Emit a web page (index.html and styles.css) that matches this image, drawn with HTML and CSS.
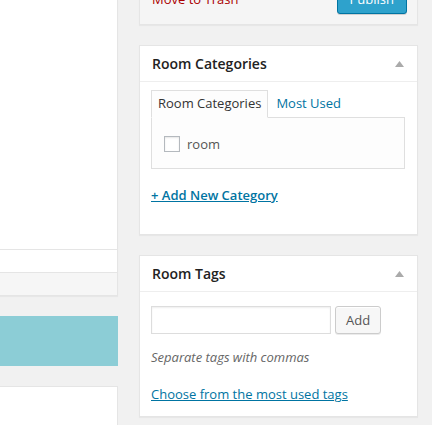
FILE: index.html
```html
<!DOCTYPE html>
<html>
<head>
<meta charset="utf-8">
<link rel="stylesheet" href="styles.css">
</head>
<body>
<div class="wrap">
  <div class="main-col">
    <div class="editor">
      <div class="editor-body"></div>
      <div class="editor-row"></div>
      <div class="editor-status"></div>
    </div>
    <div class="notice-bar"></div>
    <div class="lower-box"></div>
  </div>
  <div class="side-col">
    <div class="postbox publish-box">
      <div class="publish-actions">
        <a class="submitdelete" href="#">Move to Trash</a>
        <button class="btn-primary">Publish</button>
      </div>
    </div>

    <div class="postbox">
      <div class="postbox-head">
        <h3 class="postbox-title">Room Categories</h3>
        <svg class="toggle" width="9" height="6" viewBox="0 0 9 6"><polygon points="4.5,0 9,6 0,6" fill="#aaa"/></svg>
      </div>
      <div class="inside cat-inside">
        <ul class="tabs">
          <li class="tab tab-active">Room Categories</li>
          <li class="tab"><a href="#">Most Used</a></li>
        </ul>
        <div class="tabs-panel">
          <label class="cat-item"><span class="checkbox"></span><span>room</span></label>
        </div>
        <h4 class="add-new"><a href="#">+ Add New Category</a></h4>
      </div>
    </div>

    <div class="postbox">
      <div class="postbox-head">
        <h3 class="postbox-title">Room Tags</h3>
        <svg class="toggle" width="9" height="6" viewBox="0 0 9 6"><polygon points="4.5,0 9,6 0,6" fill="#aaa"/></svg>
      </div>
      <div class="inside tag-inside">
        <div class="ajaxtag">
          <input class="newtag" type="text">
          <button class="btn">Add</button>
        </div>
        <p class="howto">Separate tags with commas</p>
        <p class="tagcloud-link"><a href="#">Choose from the most used tags</a></p>
      </div>
    </div>
  </div>
</div>
</body>
</html>
```
FILE: styles.css
```css
html, body {
  margin: 0;
  padding: 0;
  background: #f1f1f1;
  overflow: hidden;
}
body {
  font-family: "Open Sans", "Liberation Sans", sans-serif;
  font-size: 13px;
  color: #444;
  height: 425px;
}
.wrap {
  display: flex;
  align-items: flex-start;
}
.main-col {
  width: 118px;
  margin-right: 21px;
  flex: none;
}
.editor {
  background: #fff;
  border-right: 1px solid #e5e5e5;
  border-bottom: 1px solid #e5e5e5;
  box-shadow: 0 1px 1px rgba(0,0,0,.04);
}
.editor-body {
  height: 249px;
  border-bottom: 1px solid #e5e5e5;
}
.editor-row {
  height: 22px;
  border-bottom: 1px solid #e5e5e5;
}
.editor-status {
  height: 22px;
  background: #f6f6f6;
}
.notice-bar {
  margin-top: 20px;
  height: 50px;
  background: #8ccdd6;
}
.lower-box {
  margin-top: 20px;
  height: 39px;
  background: #fff;
  border-top: 1px solid #e5e5e5;
  border-right: 1px solid #e5e5e5;
}
.side-col {
  width: 279px;
  flex: none;
}
.postbox {
  background: #fff;
  border: 1px solid #e5e5e5;
  box-shadow: 0 1px 1px rgba(0,0,0,.04);
  margin-bottom: 20px;
}
.postbox:last-child {
  margin-bottom: 0;
}
.publish-box {
  margin-top: -27px;
  background: #f5f5f5;
}
.publish-actions {
  display: flex;
  justify-content: space-between;
  align-items: center;
  padding: 10px 10px 10px 12px;
}
.submitdelete {
  color: #a00;
  text-decoration: none;
  line-height: 30px;
}
.btn-primary {
  font-family: "Open Sans", "Liberation Sans", sans-serif;
  font-size: 13px;
  height: 30px;
  line-height: 28px;
  padding: 0 12px 2px;
  color: #fff;
  background: #2ea2cc;
  border: 1px solid #0074a2;
  border-radius: 3px;
  box-shadow: inset 0 1px 0 rgba(120,200,230,.5), 0 1px 0 rgba(0,0,0,.15);
  box-sizing: border-box;
}
.postbox-head {
  display: flex;
  justify-content: space-between;
  align-items: center;
  padding: 8px 13px 8px 12px;
  border-bottom: 1px solid #eee;
}
.postbox-title {
  margin: 0;
  font-size: 14px;
  font-weight: 600;
  line-height: 19px;
  color: #222;
}
.toggle {
  display: block;
}
.inside {
  padding: 0 12px 0 11px;
}
.cat-inside {
  padding-top: 8px;
  padding-bottom: 29px;
}
.tabs {
  list-style: none;
  margin: 0;
  padding: 0;
  display: flex;
}
.tab {
  padding: 3px 6px 5px;
  line-height: 18px;
  border: 1px solid transparent;
  margin-bottom: -1px;
  position: relative;
}
.tab + .tab {
  margin-left: 1px;
}
.tab a {
  color: #0074a2;
  text-decoration: none;
}
.tab-active {
  border-color: #dfdfdf;
  border-bottom-color: #fdfdfd;
  background: #fdfdfd;
  color: #333;
}
.tabs-panel {
  border: 1px solid #dfdfdf;
  background: #fdfdfd;
  padding: 18px 12px 16px;
}
.cat-item {
  display: flex;
  align-items: center;
  height: 16px;
  line-height: 16px;
  color: #555;
}
.checkbox {
  width: 16px;
  height: 16px;
  box-sizing: border-box;
  border: 1px solid #b4b9be;
  background: #fff;
  box-shadow: inset 0 1px 2px rgba(0,0,0,.1);
  margin-right: 7px;
}
.add-new {
  margin: 17px 0 0;
  font-size: 13px;
  font-weight: 600;
  line-height: 19px;
}
.add-new a, .tagcloud-link a {
  color: #0074a2;
  text-decoration: underline;
}
.tag-inside {
  padding-top: 14px;
  padding-bottom: 12px;
}
.ajaxtag {
  display: flex;
  align-items: center;
}
.newtag {
  width: 180px;
  height: 28px;
  box-sizing: border-box;
  border: 1px solid #ddd;
  box-shadow: inset 0 1px 2px rgba(0,0,0,.07);
  background: #fff;
  margin: 0;
  padding: 3px 5px;
}
.btn {
  margin-left: 4px;
  font-family: "Open Sans", "Liberation Sans", sans-serif;
  font-size: 13px;
  height: 28px;
  line-height: 26px;
  padding: 0 10px 1px;
  color: #555;
  background: #f7f7f7;
  border: 1px solid #ccc;
  border-radius: 3px;
  box-shadow: inset 0 1px 0 #fff, 0 1px 0 rgba(0,0,0,.08);
  box-sizing: border-box;
}
.howto {
  margin: 14px 0 0;
  font-style: italic;
  color: #666;
  line-height: 19px;
}
.tagcloud-link {
  margin: 18px 0 0;
  line-height: 19px;
}
```
